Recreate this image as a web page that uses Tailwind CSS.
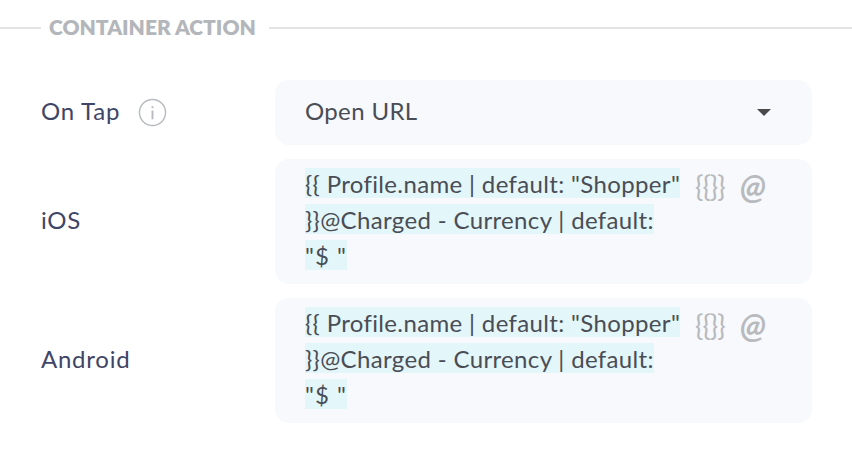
<!DOCTYPE html>
<html lang="en">
<head>
  <meta charset="UTF-8">
  <title>Container Action</title>
  <script src="https://cdn.jsdelivr.net/npm/@tailwindcss/browser@4"></script>
</head>
<body class="bg-white w-[852px] h-[452px] overflow-hidden font-['Lato',sans-serif]">

  <!-- Section title -->
  <div class="flex items-center h-[20px] mt-[18px]">
    <div class="w-[41px] h-[2px] bg-[#e3e4e6]"></div>
    <div class="ml-[8px] mr-[15px] w-[205px] whitespace-nowrap text-[21px] font-extrabold text-[#b3b6ba] pb-[2px]">CONTAINER ACTION</div>
    <div class="flex-1 h-[2px] bg-[#e3e4e6]"></div>
  </div>

  <div class="flex flex-col gap-[14px] mt-[42px] ml-[41px] w-[771px] text-[24px] tracking-[0.35px]">

    <!-- On Tap -->
    <div class="flex items-center">
      <div class="w-[234px] flex items-center text-[#3f4566] tracking-[0.75px]">
        <span class="pb-[3px]">On Tap</span>
        <svg class="ml-[18px]" width="29" height="29" viewBox="0 0 30 30" fill="none">
          <circle cx="15" cy="15" r="13.5" stroke="#b8bbbf" stroke-width="1.5"/>
          <rect x="14" y="13" width="2" height="9" fill="#b8bbbf"/>
          <rect x="14" y="8.5" width="2" height="2" fill="#b8bbbf"/>
        </svg>
      </div>
      <div class="flex-1 h-[65px] rounded-[14px] bg-[#f7f9fd] flex items-center justify-between pl-[30px] pr-[41px] text-[#4a4d55]">
        <span class="pb-[3px]">Open URL</span>
        <span class="w-0 h-0 border-x-[7px] border-x-transparent border-t-[7px] border-t-[#4a4a4a]"></span>
      </div>
    </div>

    <!-- iOS -->
    <div class="flex items-center">
      <div class="w-[234px] text-[#3f4566] tracking-[0.75px] pb-[3px]">iOS</div>
      <div class="flex-1 h-[125px] rounded-[14px] bg-[#f7f9fd] flex pl-[30px] pt-[7px]">
        <div class="w-[375px] leading-[36px] text-[#4a4d55] whitespace-nowrap">
          <span class="bg-[#e3f6fa] pt-px">{{ Profile.name | default: "Shopper"</span><br>
          <span class="bg-[#e3f6fa] pt-px">}}@Charged - Currency | default:</span><br>
          <span class="bg-[#e3f6fa] pt-px tracking-[1px]">"$ "</span>
        </div>
        <div class="flex items-start gap-[15px] mt-[2px] ml-[15px] text-[#b8babd] tracking-normal">
          <span class="text-[28px] leading-[36px] tracking-[-1px]">{{}}</span>
          <span class="text-[34px] leading-[36px] font-bold italic">@</span>
        </div>
      </div>
    </div>

    <!-- Android -->
    <div class="flex items-center">
      <div class="w-[234px] text-[#3f4566] tracking-[0.75px] pb-[4px]">Android</div>
      <div class="flex-1 h-[125px] rounded-[14px] bg-[#f7f9fd] flex pl-[30px] pt-[7px]">
        <div class="w-[375px] leading-[36px] text-[#4a4d55] whitespace-nowrap">
          <span class="bg-[#e3f6fa] pt-px">{{ Profile.name | default: "Shopper"</span><br>
          <span class="bg-[#e3f6fa] pt-px">}}@Charged - Currency | default:</span><br>
          <span class="bg-[#e3f6fa] pt-px tracking-[1px]">"$ "</span>
        </div>
        <div class="flex items-start gap-[15px] mt-[2px] ml-[15px] text-[#b8babd] tracking-normal">
          <span class="text-[28px] leading-[36px] tracking-[-1px]">{{}}</span>
          <span class="text-[34px] leading-[36px] font-bold italic">@</span>
        </div>
      </div>
    </div>

  </div>
</body>
</html>
